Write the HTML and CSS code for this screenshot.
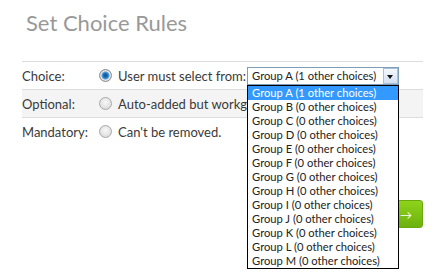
FILE: index.html
```html
<!DOCTYPE html>
<html lang="en">
<head>
    <meta charset="UTF-8">
    <title>Set Choice Rules</title>
    <link rel="stylesheet" href="styles.css">
</head>
<body>
    <div class="page">
        <h1 class="title">Set Choice Rules</h1>

        <!-- Rule rows -->
        <div class="rules">
            <div class="rule">
                <span class="rule-label">Choice:</span>
                <span class="radio checked"></span>
                <span class="rule-text">User must select from:</span>
                <div class="select">
                    <span class="select-value">Group A (1 other choices)</span>
                    <span class="select-arrow"></span>
                    <ul class="select-list">
                        <li class="selected">Group A (1 other choices)</li>
                        <li>Group B (0 other choices)</li>
                        <li>Group C (0 other choices)</li>
                        <li>Group D (0 other choices)</li>
                        <li>Group E (0 other choices)</li>
                        <li>Group F (0 other choices)</li>
                        <li>Group G (0 other choices)</li>
                        <li>Group H (0 other choices)</li>
                        <li>Group I (0 other choices)</li>
                        <li>Group J (0 other choices)</li>
                        <li>Group K (0 other choices)</li>
                        <li>Group L (0 other choices)</li>
                        <li>Group M (0 other choices)</li>
                    </ul>
                </div>
            </div>
            <div class="rule alt">
                <span class="rule-label">Optional:</span>
                <span class="radio"></span>
                <span class="rule-text">Auto-added but workgroup can remove.</span>
            </div>
            <div class="rule">
                <span class="rule-label">Mandatory:</span>
                <span class="radio"></span>
                <span class="rule-text">Can't be removed.</span>
            </div>
        </div>

        <div class="actions">
            <button class="next">Save <span class="next-arrow">&rarr;</span></button>
        </div>
    </div>
</body>
</html>
```

FILE: styles.css
```css
html, body {
    min-height: 280px;
}

body {
    margin: 0;
    font-family: 'Lato', 'Liberation Sans', sans-serif;
    background: #fff;
    color: #333;
}

.page {
    padding: 10px 9px 0 22px;
}

/* Title */
.title {
    margin: 0 0 25px 4px;
    font-size: 22px;
    line-height: 26px;
    font-weight: normal;
    color: #999999;
}

/* Rule rows */
.rules {
    border-top: 1px solid #dddddd;
}

.rule {
    display: flex;
    align-items: center;
    height: 27px;
    font-size: 13px;
    color: #3a3a3a;
}

.rule + .rule {
    border-top: 1px solid #dddddd;
}

.rule.alt {
    background-color: #f4f4f4;
}

.rule-label {
    width: 77px;
}

.radio {
    width: 11px;
    height: 11px;
    border-radius: 50%;
    border: 1px solid #a8a8a8;
    background: radial-gradient(circle at 50% 40%, #f8f8f8, #d4d4d4);
    margin-right: 6px;
    box-sizing: content-box;
}

.radio.checked {
    border-color: #8a8a8a;
    background: radial-gradient(circle, #0a4f8a 0, #1f7ac4 2.5px, #5aa3da 3.5px, #e8e8e8 4.5px, #cfcfcf 6px);
}

.rule-text {
    white-space: nowrap;
}

/* Fake open select */
.select {
    position: relative;
    display: flex;
    align-items: stretch;
    margin-left: 1px;
    width: 150px;
    height: 16px;
    border: 1px solid #7f9db9;
    font-size: 11.2px;
    line-height: 16px;
    color: #222;
}

.select-value {
    flex: 1;
    padding-left: 4px;
    white-space: nowrap;
    overflow: hidden;
}

.select-arrow {
    position: relative;
    flex: none;
    width: 15px;
    border: 1px solid #a9c0db;
    background: linear-gradient(#f4f8fd, #d3e1f3);
    box-sizing: border-box;
}

.select-arrow::after {
    content: "";
    position: absolute;
    left: 3px;
    top: 6px;
    border-left: 3.5px solid transparent;
    border-right: 3.5px solid transparent;
    border-top: 4px solid #111;
}

.select-list {
    position: absolute;
    top: 17px;
    left: -1px;
    width: 150px;
    margin: 0;
    padding: 0;
    list-style: none;
    background: #fff;
    border: 1px solid #000;
    z-index: 10;
}

.select-list li {
    height: 14px;
    line-height: 14px;
    padding-left: 4px;
    white-space: nowrap;
}

.select-list li.selected {
    background-color: #3399ff;
    color: #fff;
}

/* Actions */
.actions {
    display: flex;
    justify-content: flex-end;
    margin-top: 55px;
}

.next {
    height: 28px;
    padding: 0 10px 0 14px;
    border: 1px solid #6aa80f;
    border-radius: 3px;
    background: linear-gradient(#8fd31c, #6cb10e);
    color: #fff;
    font-family: inherit;
    font-size: 13px;
}

.next-arrow {
    font-size: 12px;
}
```
